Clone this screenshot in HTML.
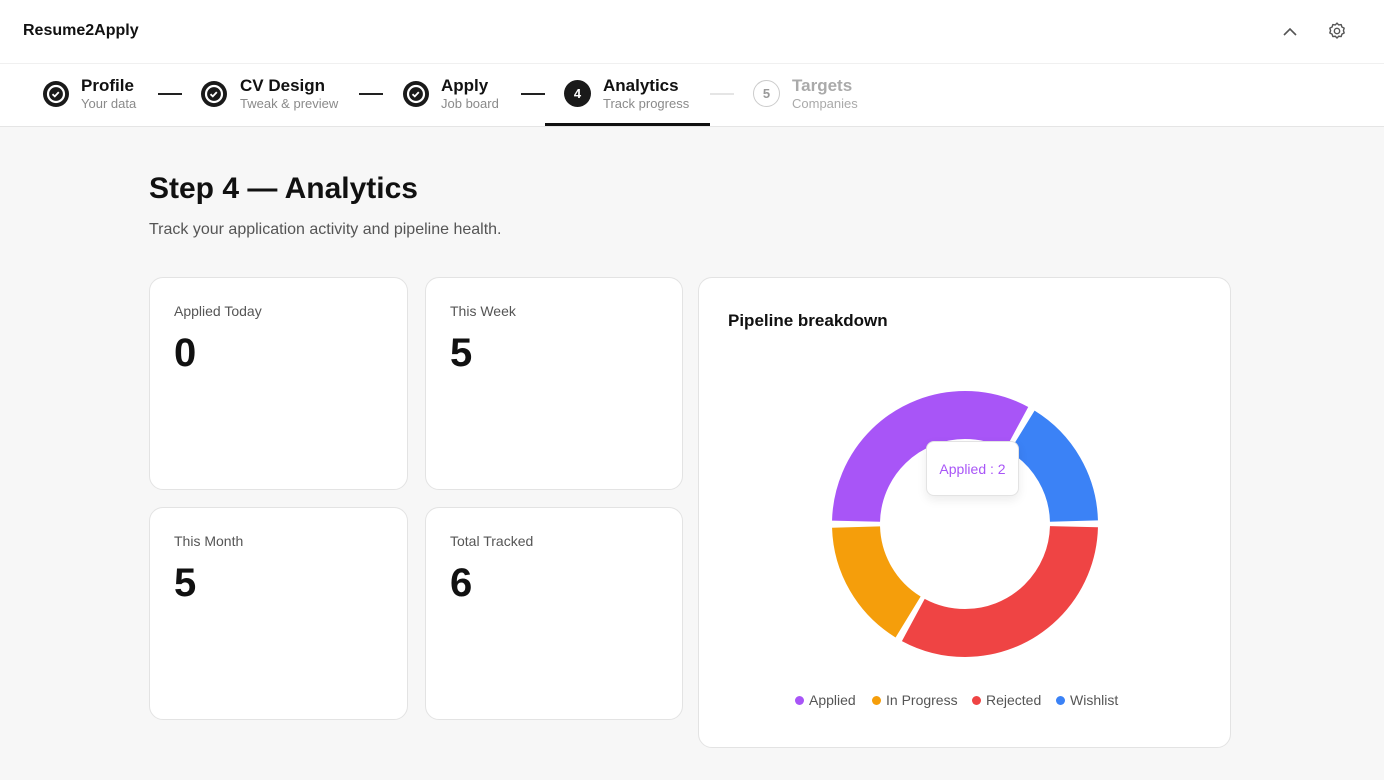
<!DOCTYPE html>
<html><head><meta charset="utf-8"><style>
*{box-sizing:border-box;margin:0;padding:0}
body{width:1384px;height:780px;overflow:hidden;background:#f7f7f7;font-family:"Liberation Sans",sans-serif;color:#111;position:relative}
.top{position:absolute;left:0;top:0;width:1384px;height:127px;background:#fff;border-bottom:1px solid #e5e5e5}
.hdr{position:absolute;left:0;top:0;width:1384px;height:64px;border-bottom:1px solid #f0f0f0}
.abs{position:absolute}
.st{position:absolute;top:77px}
.st b{display:block;font-size:17px;line-height:18px}
.st span{display:block;font-size:13px;color:#8a8a8a;line-height:18px;margin-top:0}
.ln{position:absolute;top:93px;height:2px;background:#222;width:24px}
.card{position:absolute;background:#fff;border:1px solid #e3e3e3;border-radius:14px}
.card .l{position:absolute;left:24px;top:25px;font-size:14px;color:#555}
.card .n{position:absolute;left:24px;top:53px;font-size:40px;font-weight:bold}
.leg{position:absolute;top:692px;font-size:14px;color:#555}
.leg i{display:inline-block;width:9px;height:9px;border-radius:50%;margin-right:5px;vertical-align:0}
</style></head><body>
<div class="top"></div><div class="hdr"></div>
<div class="abs" style="left:23px;top:22px;font-size:16px;font-weight:bold">Resume2Apply</div>
<svg class="abs" style="left:1281px;top:24px" width="18" height="16"><path d="M3 11 L9 5 L15 11" fill="none" stroke="#555" stroke-width="1.6"/></svg>
<svg class="abs" style="left:1327px;top:21px" width="20" height="20" viewBox="0 0 24 24"><path d="M12 2.5l2 2.2 3-.4.9 2.9 2.7 1.4-.9 2.9.9 2.9-2.7 1.4-.9 2.9-3-.4-2 2.2-2-2.2-3 .4-.9-2.9-2.7-1.4.9-2.9-.9-2.9 2.7-1.4.9-2.9 3 .4z" fill="none" stroke="#555" stroke-width="1.7" stroke-linejoin="round"/><circle cx="12" cy="12" r="3.2" fill="none" stroke="#555" stroke-width="1.7"/></svg>

<svg class="abs" style="left:42px;top:80px" width="28" height="28"><circle cx="14" cy="14" r="13" fill="#1a1a1a"/><circle cx="14" cy="14" r="8" fill="none" stroke="#fff" stroke-width="2.2"/><path d="M10.5 14.2l2.3 2.2 4-4.3" fill="none" stroke="#fff" stroke-width="1.8"/></svg>
<div class="st" style="left:81px"><b>Profile</b><span>Your data</span></div>
<div class="ln" style="left:158px"></div>
<svg class="abs" style="left:200px;top:80px" width="28" height="28"><circle cx="14" cy="14" r="13" fill="#1a1a1a"/><circle cx="14" cy="14" r="8" fill="none" stroke="#fff" stroke-width="2.2"/><path d="M10.5 14.2l2.3 2.2 4-4.3" fill="none" stroke="#fff" stroke-width="1.8"/></svg>
<div class="st" style="left:240px"><b>CV Design</b><span>Tweak &amp; preview</span></div>
<div class="ln" style="left:359px"></div>
<svg class="abs" style="left:402px;top:80px" width="28" height="28"><circle cx="14" cy="14" r="13" fill="#1a1a1a"/><circle cx="14" cy="14" r="8" fill="none" stroke="#fff" stroke-width="2.2"/><path d="M10.5 14.2l2.3 2.2 4-4.3" fill="none" stroke="#fff" stroke-width="1.8"/></svg>
<div class="st" style="left:441px"><b>Apply</b><span>Job board</span></div>
<div class="ln" style="left:521px"></div>
<div class="abs" style="left:564px;top:80px;width:27px;height:27px;border-radius:50%;background:#1a1a1a;color:#fff;font-size:13px;font-weight:bold;text-align:center;line-height:27px">4</div>
<div class="st" style="left:603px"><b>Analytics</b><span>Track progress</span></div>
<div class="abs" style="left:545px;top:123px;width:165px;height:3px;background:#111"></div>
<div class="ln" style="left:710px;background:#e5e5e5"></div>
<div class="abs" style="left:753px;top:80px;width:27px;height:27px;border-radius:50%;border:1px solid #ccc;color:#999;font-size:13px;font-weight:bold;text-align:center;line-height:25px">5</div>
<div class="st" style="left:792px"><b style="color:#aaa">Targets</b><span style="color:#aaa">Companies</span></div>

<div class="abs" style="left:149px;top:172px;font-size:30px;font-weight:bold">Step 4 — Analytics</div>
<div class="abs" style="left:149px;top:221px;font-size:16px;color:#555">Track your application activity and pipeline health.</div>

<div class="card" style="left:149px;top:277px;width:259px;height:213px"><div class="l">Applied Today</div><div class="n">0</div></div>
<div class="card" style="left:425px;top:277px;width:258px;height:213px"><div class="l">This Week</div><div class="n">5</div></div>
<div class="card" style="left:149px;top:507px;width:259px;height:213px"><div class="l">This Month</div><div class="n">5</div></div>
<div class="card" style="left:425px;top:507px;width:258px;height:213px"><div class="l">Total Tracked</div><div class="n">6</div></div>

<div class="card" style="left:698px;top:277px;width:533px;height:471px"></div>
<div class="abs" style="left:728px;top:311px;font-size:17px;font-weight:bold">Pipeline breakdown</div>
<svg class="abs" style="left:825px;top:384px" width="280" height="280" viewBox="0 0 280 280">
<g transform="translate(140,140) scale(1,-1)" fill="none" stroke-width="48">
<circle r="109" stroke="#3b82f6" stroke-dasharray="108.15 600" stroke-dashoffset="-3"/>
<circle r="109" stroke="#a855f7" stroke-dasharray="222.3 600" stroke-dashoffset="-117.15"/>
<circle r="109" stroke="#f59e0b" stroke-dasharray="108.15 600" stroke-dashoffset="-345.45"/>
<circle r="109" stroke="#ef4444" stroke-dasharray="222.3 700" stroke-dashoffset="-459.6"/>
</g></svg>
<div class="abs" style="left:926px;top:441px;width:93px;height:55px;background:#fff;border:1px solid #e3e3e3;border-radius:8px;box-shadow:0 4px 10px rgba(0,0,0,.08);color:#a855f7;font-size:14px;text-align:center;line-height:55px">Applied : 2</div>
<div class="leg" style="left:795px"><i style="background:#a855f7"></i>Applied</div>
<div class="leg" style="left:872px"><i style="background:#f59e0b"></i>In Progress</div>
<div class="leg" style="left:972px"><i style="background:#ef4444"></i>Rejected</div>
<div class="leg" style="left:1056px"><i style="background:#3b82f6"></i>Wishlist</div>
</body></html>
